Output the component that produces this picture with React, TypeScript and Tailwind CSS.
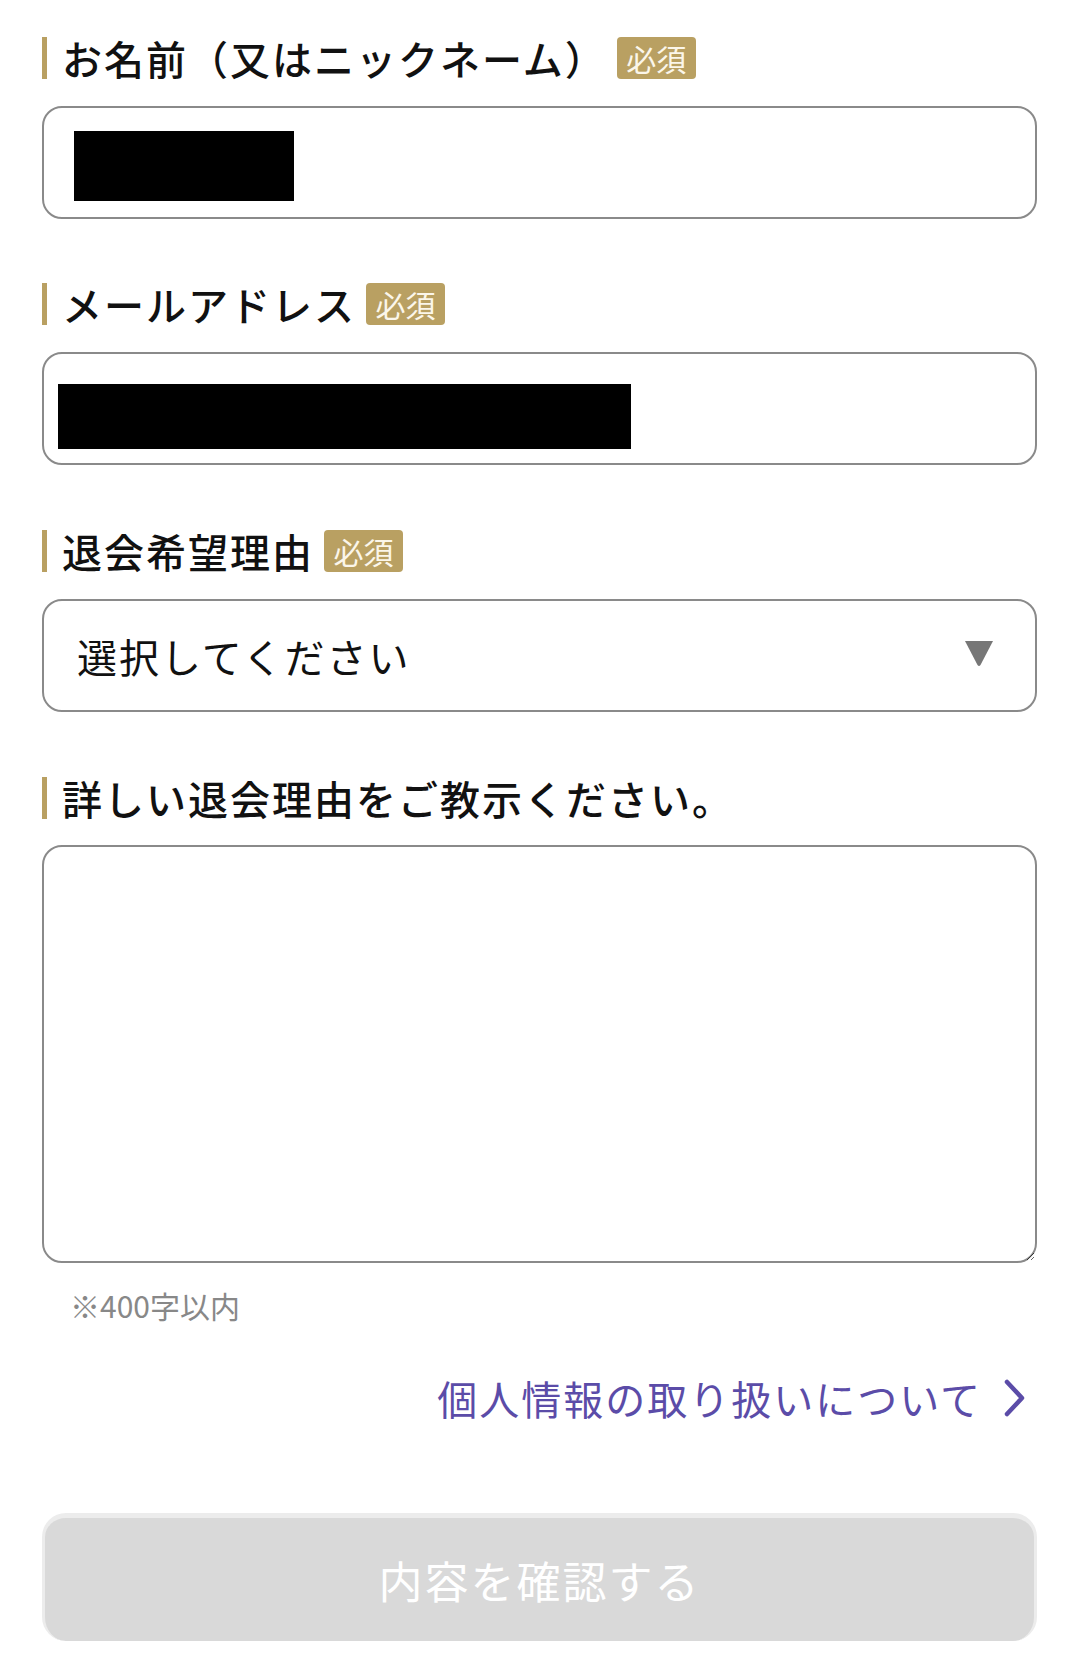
import React from "react";

function Label({ text, required }: { text: string; required?: boolean }) {
  return (
    <div className="flex h-[42px] items-center">
      <div className="h-[42px] w-[5px] bg-[#b9a062]" />
      <span className="ml-[15px] text-[40px] font-medium leading-[42px] tracking-[2px] text-[#111]">{text}</span>
      {required && (
        <span className="ml-[10px] flex h-[42px] w-[79px] items-center justify-center rounded-[4px] bg-[#b9a062] text-[30px] leading-none text-[#fbf6ea]">
          必須
        </span>
      )}
    </div>
  );
}

export default function App() {
  return (
    <div className="min-h-[1671px] bg-white pl-[42px] pr-[43px] pt-[37px] font-['Noto_Sans_CJK_JP',sans-serif]">
      <Label text="お名前（又はニックネーム）" required />
      <div className="mt-[27px] h-[113px] rounded-[20px] border-2 border-[#8a8a8a] pl-[30px] pt-[23px]">
        <div className="h-[70px] w-[220px] bg-black" />
      </div>

      <div className="mt-[64px]">
        <Label text="メールアドレス" required />
      </div>
      <div className="mt-[27px] h-[113px] rounded-[20px] border-2 border-[#8a8a8a] pl-[14px] pt-[30px]">
        <div className="h-[65px] w-[573px] bg-black" />
      </div>

      <div className="mt-[65px]">
        <Label text="退会希望理由" required />
      </div>
      <div className="mt-[27px] flex h-[113px] items-center justify-between rounded-[20px] border-2 border-[#8a8a8a] pl-[33px] pr-[42px]">
        <span className="text-[40px] leading-none tracking-[2px] text-[#111]">選択してください</span>
        <svg width="28" height="26" viewBox="0 0 28 26" className="mt-[-4px]">
          <path d="M0 0 H28 L15.5 24 Q14 26 12.5 24 Z" fill="#777777" />
        </svg>
      </div>

      <div className="mt-[65px]">
        <Label text="詳しい退会理由をご教示ください。" />
      </div>
      <textarea className="mt-[26px] block h-[418px] w-full rounded-[20px] border-2 border-[#8a8a8a] bg-white outline-none" />

      <p className="mt-[23px] pl-[28px] text-[30px] leading-[38px] text-[#888888]">※400字以内</p>

      <div className="mt-[52px] flex items-center justify-end gap-[22px] pr-[12px]">
        <span className="text-[40px] leading-[44px] tracking-[2px] text-[#5b4ca8]">個人情報の取り扱いについて</span>
        <svg width="21" height="38" viewBox="0 0 21 38">
          <path d="M3 3 L18 19 L3 35" fill="none" stroke="#5b4ca8" strokeWidth="4.5" strokeLinecap="round" strokeLinejoin="round" />
        </svg>
      </div>

      <button
        type="button"
        className="mt-[93px] flex h-[128px] w-full items-center justify-center rounded-[24px] border-x-[3px] border-t-[5px] border-b-0 border-[#ececec] bg-[#d9d9d9] text-[44px] leading-none tracking-[2px] text-white"
      >
        内容を確認する
      </button>
    </div>
  );
}
